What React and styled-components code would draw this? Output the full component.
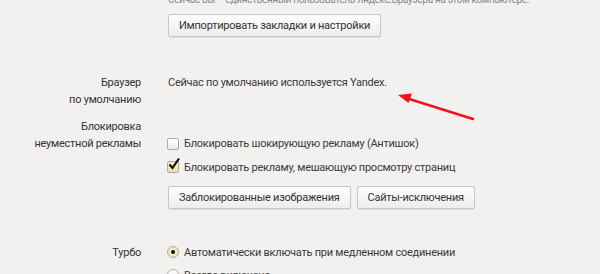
import React from "react";
import styled, { createGlobalStyle } from "styled-components";

const Global = createGlobalStyle`
  html, body { margin: 0; padding: 0; background: #f2f1f0; }
  body { font-family: Roboto, "Noto Sans", sans-serif; font-size: 11px; letter-spacing: -0.25px; color: #3a3a3a; overflow: hidden; }
`;

const Page = styled.div`
  position: relative;
  width: 600px;
  height: 274px;
  overflow: hidden;
`;

const Content = styled.div`
  display: flex;
  flex-direction: column;
  margin-top: -9px;
`;

const Row = styled.div`
  display: grid;
  grid-template-columns: 141px 1fr;
  column-gap: 27px;
  margin-top: ${(p) => p.$gap || 0}px;
`;

const Label = styled.div`
  text-align: right;
  line-height: 17px;
  color: #333;
  padding-top: ${(p) => p.$top || 0}px;
`;

const Body = styled.div`
  display: flex;
  flex-direction: column;
  align-items: flex-start;
  gap: ${(p) => p.$gap || 0}px;
`;

const Note = styled.div`
  color: #888;
  font-size: 10px;
  letter-spacing: -0.3px;
  line-height: 17px;
  white-space: nowrap;
`;

const Text = styled.div`
  line-height: 17px;
  color: #3a3a3a;
`;

const Button = styled.button`
  font-family: inherit;
  font-size: 11px;
  letter-spacing: -0.25px;
  color: #333;
  height: 23px;
  padding: 0 ${(p) => p.$pad || 10}px;
  border: 1px solid #c7c7c7;
  border-radius: 2px;
  background: linear-gradient(#fdfdfd, #ededed);
  box-shadow: 0 1px 1px rgba(0, 0, 0, 0.08);
  white-space: nowrap;
`;

const ButtonRow = styled.div`
  display: flex;
  gap: 6px;
  margin-top: ${(p) => p.$top || 0}px;
`;

const Option = styled.label`
  display: flex;
  align-items: center;
  gap: 5px;
  height: ${(p) => p.$h || 20}px;
  margin-top: ${(p) => p.$top || 0}px;
  line-height: 17px;
  white-space: nowrap;
`;

const Box = styled.span`
  position: relative;
  width: 10px;
  height: 10px;
  border: 1px solid #aaa;
  border-radius: 2px;
  background: ${(p) => (p.$checked ? "linear-gradient(#f7efc4, #efe2a6)" : "linear-gradient(#fff, #e9e9e9)")};
  flex: none;
  margin-left: -1px;
`;

const Check = styled.svg`
  position: absolute;
  left: -1px;
  top: -5px;
`;

const Radio = styled.span`
  width: 10px;
  height: 10px;
  border: 1px solid #aaa;
  border-radius: 50%;
  background: ${(p) => (p.$checked ? "radial-gradient(#fbf4d0, #ede0a4)" : "linear-gradient(#fff, #ececec)")};
  display: flex;
  align-items: center;
  justify-content: center;
  flex: none;
  margin-left: -1px;
  &::after {
    content: "";
    display: ${(p) => (p.$checked ? "block" : "none")};
    width: 4px;
    height: 4px;
    border-radius: 50%;
    background: #111;
  }
`;

const Arrow = styled.svg`
  position: absolute;
  left: 392px;
  top: 88px;
`;

export default function App() {
  return (
    <Page>
      <Global />
      <Content>
        <Row>
          <div />
          <Body $gap={6}>
            <Note>Сейчас вы – единственный пользователь Яндекс.Браузера на этом компьютере.</Note>
            <Button $pad={10}>Импортировать закладки и настройки</Button>
          </Body>
        </Row>
        <Row $gap={37}>
          <Label>
            Браузер
            <br />
            по умолчанию
          </Label>
          <Body>
            <Text>Сейчас по умолчанию используется Yandex.</Text>
          </Body>
        </Row>
        <Row $gap={10}>
          <Label>
            Блокировка
            <br />
            неуместной рекламы
          </Label>
          <Body>
            <Option $h={25} $top={13}>
              <Box />
              Блокировать шокирующую рекламу (Антишок)
            </Option>
            <Option $h={22}>
              <Box $checked>
                <Check width="14" height="14" viewBox="0 0 14 14">
                  <path d="M2.5 7.5 L5.5 11 L12 1.5" fill="none" stroke="#111" strokeWidth="2.2" strokeLinejoin="miter" />
                </Check>
              </Box>
              Блокировать рекламу, мешающую просмотру страниц
            </Option>
            <ButtonRow $top={8}>
              <Button $pad={10}>Заблокированные изображения</Button>
              <Button $pad={10}>Сайты-исключения</Button>
            </ButtonRow>
          </Body>
        </Row>
        <Row $gap={33}>
          <Label $top={2}>Турбо</Label>
          <Body $gap={3}>
            <Option>
              <Radio $checked />
              Автоматически включать при медленном соединении
            </Option>
            <Option>
              <Radio />
              Всегда включено
            </Option>
          </Body>
        </Row>
      </Content>
      <Arrow width="90" height="40" viewBox="0 0 90 40">
        <path d="M81 31 L14 10" stroke="#f0141a" strokeWidth="2.6" strokeLinecap="round" />
        <path d="M6 7 L20 5.5 L16.5 15 Z" fill="#f0141a" />
      </Arrow>
    </Page>
  );
}
